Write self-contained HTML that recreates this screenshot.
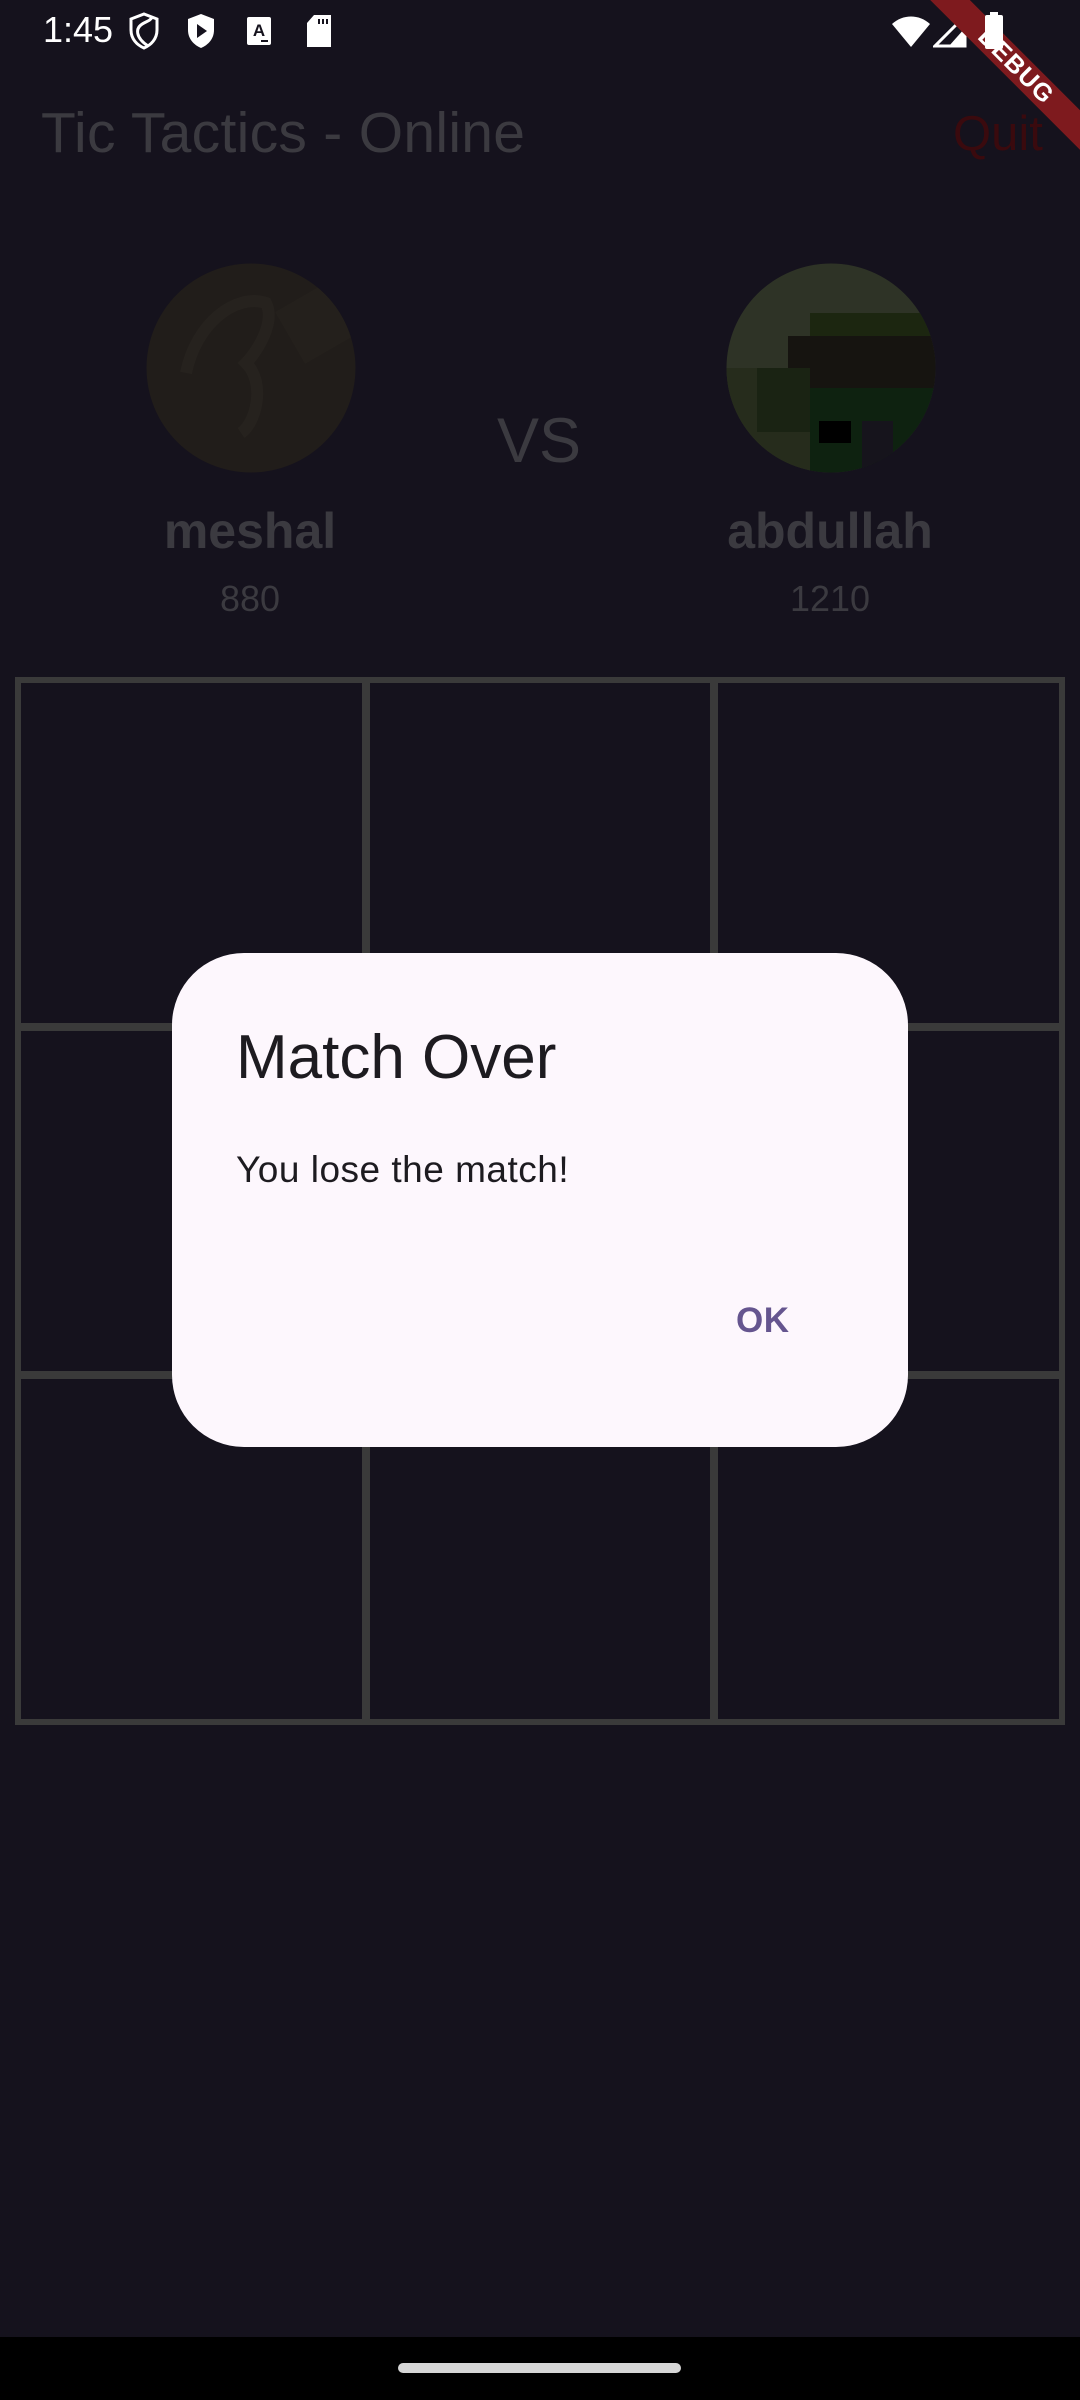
<!DOCTYPE html>
<html><head><meta charset="utf-8">
<style>
*{margin:0;padding:0;box-sizing:border-box}
body{width:1080px;height:2400px;background:#15121d;position:relative;overflow:hidden;font-family:"Liberation Sans",Roboto,sans-serif}
.abs{position:absolute}
.t{white-space:nowrap;line-height:1}
</style></head><body>

<!-- status bar -->
<div class="abs t" style="left:43px;top:12px;font-size:36px;color:#fff">1:45</div>
<svg class="abs" style="left:128px;top:12px" width="32" height="38" viewBox="0 0 32 38">
<path d="M16 2 L29 7 V18 C29 27 23 33 16 36 C9 33 3 27 3 18 V7 Z" fill="none" stroke="#fff" stroke-width="3"/>
<path d="M20 34 C8 26 6 16 16 11 C20 9 23 8 24 5" fill="none" stroke="#fff" stroke-width="3"/>
</svg>
<svg class="abs" style="left:186px;top:12px" width="30" height="38" viewBox="0 0 30 38">
<path d="M15 2 L28 7 V18 C28 27 22 33 15 36 C8 33 2 27 2 18 V7 Z" fill="#fff"/>
<path d="M11 12 L21 19 L11 26 Z" fill="#15121d"/>
</svg>
<svg class="abs" style="left:247px;top:17px" width="26" height="28" viewBox="0 0 26 28">
<rect x="0" y="0" width="24" height="28" rx="2" fill="#fff"/>
<text x="12" y="19" font-size="17" font-weight="bold" text-anchor="middle" fill="#15121d" font-family="Liberation Sans">A</text>
<rect x="14" y="23" width="7" height="2" fill="#15121d"/>
</svg>
<svg class="abs" style="left:305px;top:15px" width="28" height="34" viewBox="0 0 28 34">
<path d="M9 0 H26 V32 H2 V8 Z" fill="#fff"/>
<rect x="13" y="4" width="2" height="5" fill="#15121d"/><rect x="17" y="4" width="2" height="5" fill="#15121d"/><rect x="21" y="4" width="2" height="5" fill="#15121d"/>
</svg>
<svg class="abs" style="left:891px;top:14px" width="40" height="34" viewBox="0 0 40 34">
<path d="M20 33 L1 10 C12 0 28 0 39 10 Z" fill="#fff"/>
</svg>
<svg class="abs" style="left:933px;top:14px" width="34" height="34" viewBox="0 0 34 34">
<path d="M32 2 V32 H2 Z" fill="none" stroke="#fff" stroke-width="3" stroke-linejoin="miter"/>
<path d="M32 14 V32 H16 Z" fill="#fff"/>
</svg>

<!-- debug banner -->
<div class="abs" style="left:866px;top:52px;width:300px;height:28px;background:#7e1a1e;transform:rotate(45deg);color:#fff;font-weight:bold;font-size:25px;text-align:center;line-height:28px;letter-spacing:1px">DEBUG</div>
<svg class="abs" style="left:983px;top:12px" width="22" height="38" viewBox="0 0 22 38">
<rect x="7" y="0" width="8" height="4" fill="#fff"/><rect x="2" y="3" width="18" height="34" rx="2" fill="#fff"/>
</svg>

<!-- app bar -->
<div class="abs t" style="left:41px;top:105px;font-size:57px;color:#3b3a40;letter-spacing:0.3px">Tic Tactics - Online</div>
<div class="abs t" style="left:953px;top:110px;font-size:49px;color:#3a0a0e">Quit</div>

<!-- avatars -->
<svg class="abs" style="left:146px;top:263px" width="210" height="210" viewBox="0 0 210 210">
<defs><clipPath id="c1"><circle cx="105" cy="105" r="104.5"/></clipPath></defs>
<g clip-path="url(#c1)">
<rect width="210" height="210" fill="#211d1a"/>
<path d="M40 110 C50 60 90 30 120 40 C130 60 110 90 100 100 C120 120 110 160 95 170" fill="none" stroke="#26221e" stroke-width="12"/>
<rect x="140" y="30" width="70" height="60" fill="#24201c" transform="rotate(-30 170 60)"/>
</g></svg>
<svg class="abs" style="left:726px;top:263px" width="210" height="210" viewBox="0 0 210 210">
<defs><clipPath id="c2"><circle cx="105" cy="105" r="104.5"/></clipPath></defs>
<g clip-path="url(#c2)">
<rect width="210" height="210" fill="#2e3326"/>
<rect x="84" y="50" width="126" height="23" fill="#1c2610"/>
<rect x="62" y="73" width="148" height="52" fill="#161410"/>
<rect x="0" y="105" width="84" height="105" fill="#262c1c"/>
<rect x="31" y="105" width="53" height="64" fill="#1a2313"/>
<rect x="84" y="125" width="126" height="85" fill="#0e2210"/>
<rect x="93" y="158" width="32" height="22" fill="#000"/>
<rect x="136" y="158" width="31" height="62" fill="#16141c"/>
</g></svg>

<div class="abs t" style="left:497px;top:410px;font-size:63px;color:#3b3a40">VS</div>
<div class="abs t" style="left:100px;top:506px;width:300px;text-align:center;font-size:50px;font-weight:bold;color:#3b3a40">meshal</div>
<div class="abs t" style="left:680px;top:506px;width:300px;text-align:center;font-size:50px;font-weight:bold;color:#3b3a40">abdullah</div>
<div class="abs t" style="left:150px;top:581px;width:200px;text-align:center;font-size:36px;color:#3b3a40">880</div>
<div class="abs t" style="left:730px;top:581px;width:200px;text-align:center;font-size:36px;color:#3b3a40">1210</div>

<!-- board -->
<div class="abs" style="left:15px;top:677px;width:1050px;height:1048px;border:2px solid #3a3a3a;display:grid;grid-template-columns:repeat(3,1fr);grid-template-rows:repeat(3,1fr)">
<div style="border:4px solid #3a3a3a"></div><div style="border:4px solid #3a3a3a"></div><div style="border:4px solid #3a3a3a"></div>
<div style="border:4px solid #3a3a3a"></div><div style="border:4px solid #3a3a3a"></div><div style="border:4px solid #3a3a3a"></div>
<div style="border:4px solid #3a3a3a"></div><div style="border:4px solid #3a3a3a"></div><div style="border:4px solid #3a3a3a"></div>
</div>

<!-- dialog -->
<div class="abs" style="left:172px;top:953px;width:736px;height:494px;background:#fdf7fd;border-radius:72px"></div>
<div class="abs t" style="left:236px;top:1027px;font-size:62px;color:#1d1b20">Match Over</div>
<div class="abs t" style="left:236px;top:1151px;font-size:37px;color:#1d1b20;letter-spacing:0.5px">You lose the match!</div>
<div class="abs t" style="left:736px;top:1303px;font-size:35px;font-weight:bold;color:#65558f;letter-spacing:0.5px">OK</div>

<!-- nav bar -->
<div class="abs" style="left:0;top:2337px;width:1080px;height:63px;background:#000"></div>
<div class="abs" style="left:398px;top:2363px;width:283px;height:10px;border-radius:5px;background:#d6d6d6"></div>
</body></html>
